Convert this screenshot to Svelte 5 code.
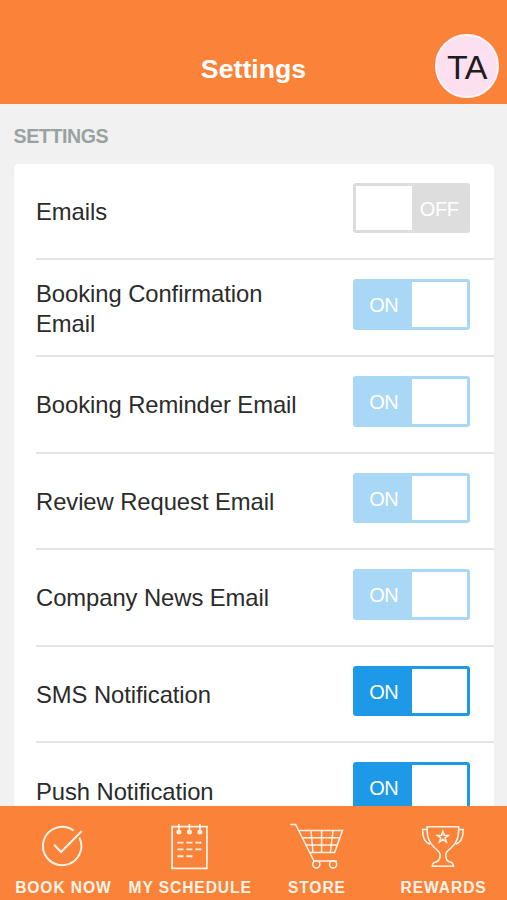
<script>
    let settings = [
        { id: 1, name: "Emails", on: false, dimmed: true },
        { id: 2, name: "Booking Confirmation Email", on: true, dimmed: true },
        { id: 3, name: "Booking Reminder Email", on: true, dimmed: true },
        { id: 4, name: "Review Request Email", on: true, dimmed: true },
        { id: 5, name: "Company News Email", on: true, dimmed: true },
        { id: 6, name: "SMS Notification", on: true, dimmed: false },
        { id: 7, name: "Push Notification", on: true, dimmed: false }
    ];

    const tabs = [
        { icon: "check", label: "BOOK NOW" },
        { icon: "calendar", label: "MY SCHEDULE" },
        { icon: "cart", label: "STORE" },
        { icon: "trophy", label: "REWARDS" }
    ];

    const toggle = (id) => {
        settings = settings.map((s) => s.id === id ? { ...s, on: !s.on } : s);
    }
</script>

<div class="app">
    <header class="header">
        <span></span>
        <h1 class="title">Settings</h1>
        <div class="avatar">TA</div>
    </header>

    <main class="content">
        <h2 class="section-title">SETTINGS</h2>
        <div class="card">
            {#each settings as setting (setting.id)}
                <div class="row">
                    <div class="row-name">{setting.name}</div>
                    <button class="switch" class:on={setting.on} class:dimmed={setting.dimmed} aria-pressed={setting.on} on:click={() => toggle(setting.id)}>
                        <span class="switch-label">{setting.on ? "ON" : "OFF"}</span>
                        <span class="switch-knob"></span>
                    </button>
                </div>
            {/each}
        </div>
    </main>

    <nav class="tabs">
        {#each tabs as tab (tab.label)}
            <div class="tab">
                <svg class="tab-icon" viewBox="0 0 60 50" width="60" height="50">
                    {#if tab.icon === "check"}
                        <g stroke-width="2">
                            <path d="M40.6 10.6A19.2 19.2 0 1 0 46.4 17.6" />
                            <path d="M21.1 24.7L28.1 32L48.8 11" />
                        </g>
                    {:else if tab.icon === "calendar"}
                        <path d="M12.1 6.6H46.9V48.3H12.1Z" />
                        <path d="M18.9 4V11M29.4 4V11M39.9 4V11" />
                        <g class="dots">
                            <circle cx="18.9" cy="12" r="2.5" />
                            <circle cx="29.4" cy="12" r="2.5" />
                            <circle cx="39.9" cy="12" r="2.5" />
                        </g>
                        <path stroke-width="1.9" d="M17.4 22.6h6M26.4 22.6h6M35.4 22.6h6M17.4 29.4h6M26.4 29.4h6M35.4 29.4h6M17.4 36.3h6M26.4 36.3h6" />
                    {:else if tab.icon === "cart"}
                        <g stroke-width="1.5">
                            <path d="M3.3 4.5H8.6L27 41H50" />
                            <path d="M12 10.5H55.5L47.6 32.5H22.6" />
                            <path d="M15.6 17.8H52.8M19.3 25H50.2M24 10.5L26 32.5M34.6 10.5V32.5M46 10.5L43.4 32.5" />
                            <circle cx="29.3" cy="44.3" r="3.6" />
                            <circle cx="46.1" cy="44.3" r="3.6" />
                        </g>
                    {:else}
                        <g stroke-width="1.6">
                            <path d="M13.1 6.8H44.7C44.7 17.5 43 22.5 37.5 27.5C33.5 31 31.7 31.5 31.7 35.5C31.7 39.5 33.5 41.7 37 42.2Q39.4 43 39.4 46.2H18.4Q18.4 43 20.8 42.2C24.3 41.7 26.1 39.5 26.1 35.5C26.1 31.5 24.3 31 20.3 27.5C14.8 22.5 13.1 17.5 13.1 6.8Z" />
                            <path d="M13.1 9.5H8.6C8.4 17 10.2 22 16 24.3M44.7 9.5H49.2C49.4 17 47.6 22 41.8 24.3" />
                            <path d="M28.9 11.4L30.3 15.3L34.3 15.4L31.1 17.9L32.3 21.8L28.9 19.5L25.5 21.8L26.7 17.9L23.5 15.4L27.5 15.3Z" />
                        </g>
                    {/if}
                </svg>
                <span class="tab-label">{tab.label}</span>
            </div>
        {/each}
    </nav>
</div>

<style>
    :global(body) {
        margin: 0;
    }

    .app {
        height: 900px;
        display: flex;
        flex-direction: column;
        overflow: hidden;
        background: #f1f1f1;
        font-family: "Liberation Sans", Arial, sans-serif;
    }

    .header {
        flex: none;
        box-sizing: border-box;
        height: 104px;
        padding: 34px 8px 0 8px;
        display: grid;
        grid-template-columns: 64px 1fr 64px;
        align-items: start;
        background: #fb8339;
    }

    .title {
        margin: 20px 0 0;
        font-size: 26.7px;
        line-height: 30px;
        text-align: center;
        color: #ffffff;
    }

    .avatar {
        box-sizing: border-box;
        width: 64px;
        height: 64px;
        border: 2px solid #fff4fa;
        border-radius: 50%;
        background: #fde0ef;
        color: #211b20;
        font-size: 34px;
        line-height: 62px;
        letter-spacing: -0.5px;
        text-align: center;
    }

    .content {
        flex: 1;
        min-height: 0;
        overflow: hidden;
        padding: 0 13px 0 13.5px;
    }

    .section-title {
        margin: 0;
        padding: 21px 0 16.8px;
        font-size: 19.6px;
        line-height: 22px;
        letter-spacing: -0.4px;
        color: #9ba1a1;
    }

    .card {
        padding-left: 22.5px;
        border-radius: 5px;
        background: #ffffff;
    }

    .row {
        box-sizing: border-box;
        height: 96.6px;
        padding-right: 24px;
        display: flex;
        align-items: center;
        justify-content: space-between;
        border-bottom: 2px solid #e4e4e4;
    }

    .row-name {
        width: 280px;
        padding-top: 2px;
        font-size: 23.8px;
        line-height: 30px;
        letter-spacing: -0.06px;
        color: #2b2b2b;
    }

    .switch {
        box-sizing: border-box;
        width: 117px;
        height: 50.5px;
        margin: 0 0 6px;
        padding: 3px;
        display: flex;
        flex-direction: row-reverse;
        border: 0;
        border-radius: 3px;
        background: #dddddd;
        color: #ffffff;
        font-family: inherit;
        font-size: 20px;
        letter-spacing: -0.4px;
    }

    .switch.on {
        flex-direction: row;
        background: #1d99e8;
    }

    .switch.on.dimmed {
        background: #a9d8f6;
    }

    .switch-label {
        flex: 1;
        line-height: 47px;
        text-align: center;
    }

    .switch-knob {
        width: 55.5px;
        height: 44.5px;
        background: #ffffff;
    }

    .tabs {
        flex: none;
        height: 94px;
        display: grid;
        grid-template-columns: repeat(4, 1fr);
        background: #fb8339;
    }

    .tab {
        padding-top: 14px;
        display: flex;
        flex-direction: column;
        align-items: center;
        color: #fff3e8;
    }

    .tab-icon {
        fill: none;
        stroke: currentColor;
        stroke-width: 1.7;
    }

    .dots {
        fill: currentColor;
        stroke: none;
    }

    .tab-label {
        margin-top: 8px;
        font-size: 15.6px;
        line-height: 19px;
        font-weight: bold;
        letter-spacing: 0.9px;
        white-space: nowrap;
    }
</style>
